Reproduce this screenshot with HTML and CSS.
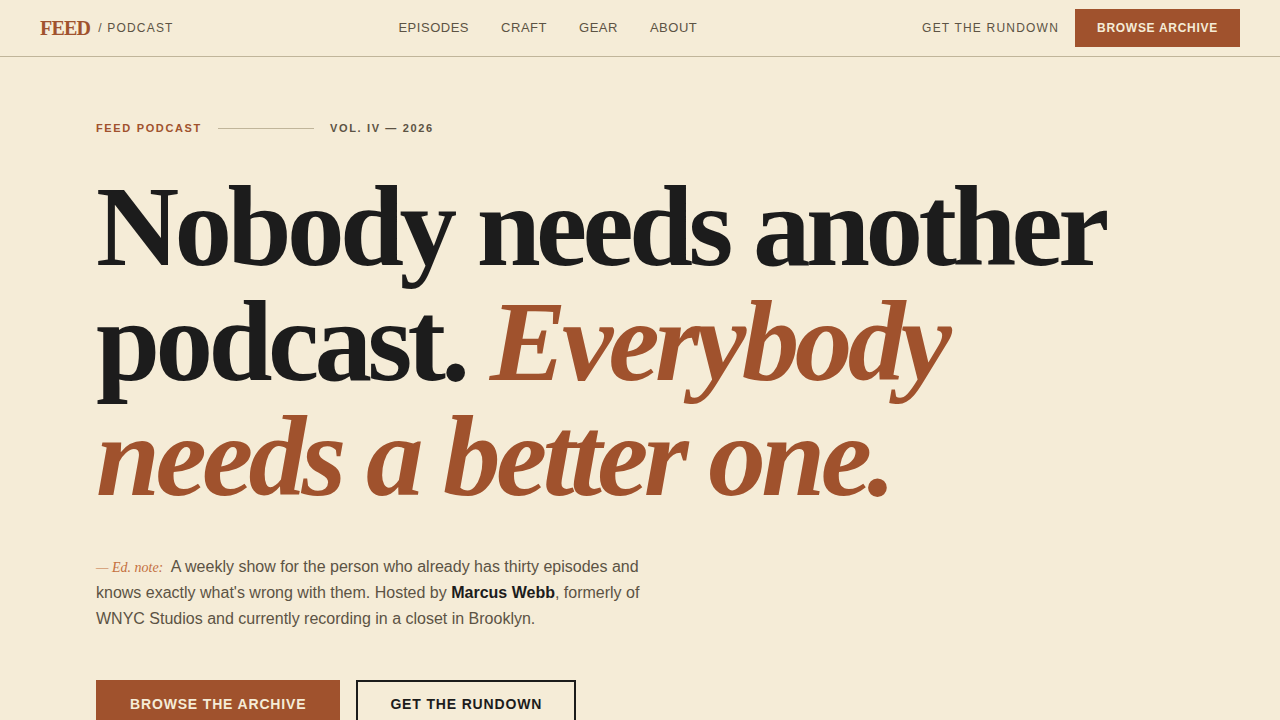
FILE: index.html
```html
<!DOCTYPE html>
<html lang="en">
<head>
    <meta charset="UTF-8">
    <meta name="viewport" content="width=device-width, initial-scale=1.0">
    <title>Feed Podcast</title>
    <link rel="stylesheet" href="styles.css">
</head>
<body>
    <header class="site-header">
        <a class="brand" href="#home">
            <span class="brand-name">FEED</span>
            <span class="brand-sub">/ PODCAST</span>
        </a>
        <nav class="site-nav">
            <a href="#episodes">Episodes</a>
            <a href="#craft">Craft</a>
            <a href="#gear">Gear</a>
            <a href="#about">About</a>
        </nav>
        <div class="header-actions">
            <a class="header-link" href="#rundown">Get the Rundown</a>
            <a class="header-cta" href="#archive">Browse Archive</a>
        </div>
    </header>

    <main class="hero" id="home">
        <div class="kicker">
            <span class="kicker-name">Feed Podcast</span>
            <span class="kicker-rule"></span>
            <span>Vol. IV — 2026</span>
        </div>
        <h1>Nobody needs another podcast. <em>Everybody needs a better one.</em></h1>
        <p class="intro">
            <span class="ed-note">— Ed. note:</span>
            A weekly show for the person who already has thirty episodes and knows exactly what's wrong with them. Hosted by <strong>Marcus Webb</strong>, formerly of WNYC Studios and currently recording in a closet in Brooklyn.
        </p>
        <div class="hero-actions">
            <a class="btn btn-primary" href="#archive">Browse the Archive</a>
            <a class="btn btn-outline" href="#rundown">Get the Rundown</a>
        </div>
    </main>
</body>
</html>
```

FILE: styles.css
```css
* {
    box-sizing: border-box;
}

body {
    margin: 0;
    background-color: #f5ecd7;
    color: #1c1c1c;
    font-family: "Liberation Sans", Arial, sans-serif;
}

a {
    color: inherit;
    text-decoration: none;
}

.site-header {
    display: flex;
    align-items: center;
    justify-content: space-between;
    height: 57px;
    padding: 0 40px;
    border-bottom: 1px solid #c0b59a;
    color: #5c5344;
    text-transform: uppercase;
}

.brand {
    display: flex;
    align-items: center;
    gap: 8px;
}

.brand-name {
    color: #a0522d;
    font-family: "Liberation Serif", "Times New Roman", serif;
    font-size: 20px;
    font-weight: bold;
    letter-spacing: -0.04em;
}

.brand-sub,
.header-link {
    font-size: 12px;
    letter-spacing: 0.1em;
}

.site-nav {
    display: flex;
    gap: 32px;
    font-size: 13px;
    line-height: 14px;
    letter-spacing: 0.04em;
}

.header-actions {
    display: flex;
    align-items: center;
    gap: 16px;
}

.header-cta {
    padding: 12px 22px;
    background-color: #a0522d;
    color: #f5ecd7;
    font-size: 12px;
    font-weight: bold;
    line-height: 14px;
    letter-spacing: 0.06em;
}

.hero {
    padding: 64px 96px;
}

.kicker {
    display: flex;
    align-items: center;
    gap: 16px;
    color: #5c5344;
    font-size: 11px;
    font-weight: bold;
    line-height: 14px;
    letter-spacing: 0.15em;
    text-transform: uppercase;
}

.kicker-name {
    color: #a0522d;
}

.kicker-rule {
    width: 96px;
    height: 1px;
    background-color: #c0b59a;
}

h1 {
    max-width: 1040px;
    margin: 34px 0 0;
    font-family: "Liberation Serif", "Times New Roman", serif;
    font-size: 9vw;
    font-weight: bold;
    line-height: 1;
    letter-spacing: -0.04em;
}

h1 em {
    color: #a0522d;
}

.intro {
    max-width: 560px;
    margin: 39px 0 0;
    color: #5c5344;
    font-size: 16px;
    line-height: 26px;
}

.intro strong {
    color: #1c1c1c;
}

.ed-note {
    margin-right: 4px;
    color: #c4703f;
    font-family: "Liberation Serif", "Times New Roman", serif;
    font-size: 14px;
    font-style: italic;
    line-height: 1;
}

.hero-actions {
    display: flex;
    gap: 16px;
    margin-top: 48px;
}

.btn {
    padding: 14px 32px;
    border: 2px solid #a0522d;
    font-size: 14px;
    font-weight: bold;
    line-height: 16px;
    letter-spacing: 0.06em;
    text-transform: uppercase;
}

.btn-primary {
    background-color: #a0522d;
    color: #f5ecd7;
}

.btn-outline {
    border-color: #1c1c1c;
}
```
